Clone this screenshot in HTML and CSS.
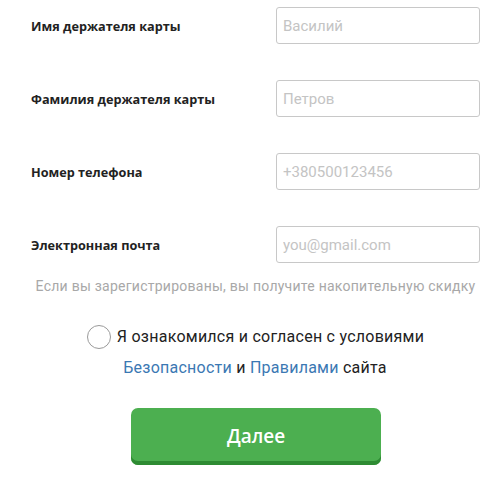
FILE: index.html
```html
<!DOCTYPE html>
<html lang="ru">
<head>
<meta charset="utf-8">
<link rel="stylesheet" href="styles.css">
</head>
<body>
<form class="form">
  <div class="rows">
    <div class="row">
      <label class="label">Имя держателя карты</label>
      <input class="field" type="text" placeholder="Василий">
    </div>
    <div class="row">
      <label class="label">Фамилия держателя карты</label>
      <input class="field" type="text" placeholder="Петров">
    </div>
    <div class="row">
      <label class="label">Номер телефона</label>
      <input class="field" type="text" placeholder="+380500123456">
    </div>
    <div class="row">
      <label class="label">Электронная почта</label>
      <input class="field" type="text" placeholder="you@gmail.com">
    </div>
  </div>
  <p class="hint">Если вы зарегистрированы, вы получите накопительную скидку</p>
  <div class="agree">
    <div class="agree-line"><span class="radio"></span><span>Я ознакомился и согласен с условиями</span></div>
    <div class="agree-line2"><a class="link" href="#">Безопасности</a> и <a class="link" href="#">Правилами</a> сайта</div>
  </div>
  <div class="actions">
    <button class="btn" type="button">Далее</button>
  </div>
</form>
</body>
</html>
```
FILE: styles.css
```css
* { box-sizing: border-box; }
html, body { margin: 0; padding: 0; background: #fff; }
body { font-family: "Roboto", "Open Sans", sans-serif; color: #222; }
.form { width: 501px; }
.rows { display: flex; flex-direction: column; gap: 36px; padding-top: 7px; }
.row { display: grid; grid-template-columns: 245px 204px; align-items: center; padding-left: 31px; height: 37px; }
.label { font-family: "Open Sans", sans-serif; font-weight: 700; font-size: 12.7px; color: #222; }
.field {
  width: 204px; height: 37px; border: 1px solid #c8c8c8; border-radius: 3px;
  padding: 0 6px; font-family: "Roboto", sans-serif; font-size: 15px; color: #333; outline: none;
}
.field::placeholder { color: #c4c4c4; }
.hint { margin: 15px 0 0; padding-left: 10px; text-align: center; font-size: 14px; color: #a8a8a8; letter-spacing: 0.25px; }
.agree { margin-top: 31px; display: flex; flex-direction: column; align-items: center; font-size: 16px; line-height: 20px; color: #222; letter-spacing: 0.25px; }
.agree-line { display: flex; align-items: center; gap: 6px; margin-left: 10px; }
.radio { width: 24px; height: 24px; border: 1px solid #9a9a9a; border-radius: 50%; display: inline-block; }
.agree-line2 { margin-top: 9px; margin-left: 9px; }
.link { color: #3b78b3; text-decoration: none; }
.actions { display: flex; justify-content: center; margin-top: 30px; }
.btn {
  width: 250px; height: 57px; border: 0; border-radius: 7px; background: #4caf50;
  box-shadow: inset 0 -4px 0 #2e8b33; color: #fff; font-family: "Open Sans", sans-serif;
  font-weight: 600; font-size: 19px; padding-bottom: 3px; margin-left: 11px;
}
```
